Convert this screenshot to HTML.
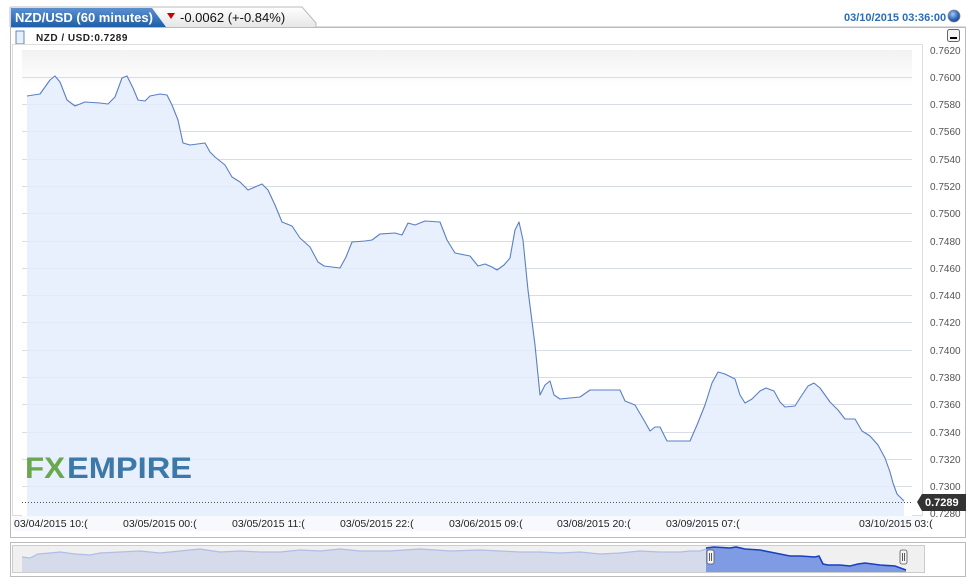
<!DOCTYPE html>
<html><head><meta charset="utf-8"><style>
html,body{margin:0;padding:0;background:#fff;width:976px;height:585px;overflow:hidden;font-family:"Liberation Sans",Verdana,sans-serif}
</style></head><body>
<svg width="976" height="585" viewBox="0 0 976 585" xmlns="http://www.w3.org/2000/svg" font-family="Liberation Sans, sans-serif">
<defs>
<linearGradient id="tab" x1="0" y1="0" x2="0" y2="1"><stop offset="0" stop-color="#5b8fd0"/><stop offset="1" stop-color="#1d5fa8"/></linearGradient>
<linearGradient id="tab2" x1="0" y1="0" x2="0" y2="1"><stop offset="0" stop-color="#ffffff"/><stop offset="1" stop-color="#e6e6e6"/></linearGradient>
<linearGradient id="bg" x1="0" y1="0" x2="0" y2="1"><stop offset="0" stop-color="#f2f2f2"/><stop offset="0.08" stop-color="#ffffff"/><stop offset="1" stop-color="#ffffff"/></linearGradient>
<radialGradient id="ball" cx="0.4" cy="0.35" r="0.7"><stop offset="0" stop-color="#a8c8f0"/><stop offset="0.6" stop-color="#2f6cc0"/><stop offset="1" stop-color="#1a3f80"/></radialGradient>
</defs>
<path d="M10 27 L10 8 Q10 7 12 7 L302 7 L316 23 L316 27" fill="url(#tab2)" stroke="#bbb"/>
<line x1="316" y1="27" x2="966" y2="27" stroke="#bbb"/>
<path d="M11 27 L11 8 L152 8 L166 27 Z" fill="url(#tab)"/>
<text x="15" y="22" font-size="13" font-weight="bold" fill="#fff">NZD/USD (60 minutes)</text>
<path d="M167 13 L175 13 L171 19 Z" fill="#c00"/>
<text x="180" y="22" font-size="13" fill="#111">-0.0062 (+-0.84%)</text>
<text x="844" y="21" font-size="11" font-weight="bold" fill="#2a6db8">03/10/2015 03:36:00</text>
<circle cx="954" cy="16" r="6" fill="url(#ball)" stroke="#888" stroke-width="0.8"/>
<rect x="10.5" y="27.5" width="955" height="510" fill="#fff" stroke="#bbb"/>
<rect x="16" y="31" width="8" height="13" fill="#e8f0fb" stroke="#3a6fb5" stroke-width="0.8"/>
<text x="36" y="41" font-size="10" font-weight="bold" fill="#222" letter-spacing="0.5">NZD / USD:0.7289</text>
<rect x="947.5" y="29.5" width="12" height="12" rx="2" fill="#f4f4f4" stroke="#666"/>
<rect x="950" y="37" width="7" height="2" fill="#000"/>
<rect x="12.5" y="44.5" width="910" height="471" fill="#fff" stroke="#ddd"/>
<rect x="22" y="50" width="890" height="466" fill="url(#bg)"/>
<g stroke="#d8dce4" stroke-width="1">
<line x1="22" y1="77.5" x2="912" y2="77.5"/><line x1="22" y1="104.5" x2="912" y2="104.5"/><line x1="22" y1="131.5" x2="912" y2="131.5"/><line x1="22" y1="159.5" x2="912" y2="159.5"/><line x1="22" y1="186.5" x2="912" y2="186.5"/><line x1="22" y1="213.5" x2="912" y2="213.5"/><line x1="22" y1="241.5" x2="912" y2="241.5"/><line x1="22" y1="268.5" x2="912" y2="268.5"/><line x1="22" y1="295.5" x2="912" y2="295.5"/><line x1="22" y1="322.5" x2="912" y2="322.5"/><line x1="22" y1="350.5" x2="912" y2="350.5"/><line x1="22" y1="377.5" x2="912" y2="377.5"/><line x1="22" y1="404.5" x2="912" y2="404.5"/><line x1="22" y1="432.5" x2="912" y2="432.5"/><line x1="22" y1="459.5" x2="912" y2="459.5"/><line x1="22" y1="486.5" x2="912" y2="486.5"/>
</g>
<polygon fill="#e3edfb" fill-opacity="0.85" points="27,516 27,96 40,94 50,80 55,76 60,82 67,100 75,106 85,102 100,103 108,104 115,97 122,78 127,76 133,88 138,100 145,101 150,96 160,94 167,95 172,105 178,120 183,143 190,145 205,143 210,152 215,157 225,165 232,177 240,182 248,190 255,187 262,184 268,190 275,205 282,222 292,226 300,238 310,247 318,262 324,266 340,268 346,257 352,242 365,241 372,240 380,234 395,233 402,235 408,223 415,225 425,221 440,222 447,240 455,253 470,256 478,266 485,264 492,267 497,270 504,265 510,258 515,230 519,222 523,240 528,290 535,345 540,395 545,385 550,381 554,395 560,399 570,398 580,397 590,390 600,390 620,390 625,401 635,405 645,422 650,431 655,427 660,427 667,441 680,441 690,441 697,425 705,405 712,383 718,372 725,374 735,379 740,395 745,403 752,399 760,391 766,388 774,391 780,402 785,407 795,406 800,398 808,386 814,383 820,388 830,402 838,410 845,419 855,419 862,431 870,436 878,445 885,458 890,472 893,483 897,494 904,501 904,516"/>
<polyline fill="none" stroke="#5b7fc4" stroke-width="1.1" stroke-linejoin="round" points="27,96 40,94 50,80 55,76 60,82 67,100 75,106 85,102 100,103 108,104 115,97 122,78 127,76 133,88 138,100 145,101 150,96 160,94 167,95 172,105 178,120 183,143 190,145 205,143 210,152 215,157 225,165 232,177 240,182 248,190 255,187 262,184 268,190 275,205 282,222 292,226 300,238 310,247 318,262 324,266 340,268 346,257 352,242 365,241 372,240 380,234 395,233 402,235 408,223 415,225 425,221 440,222 447,240 455,253 470,256 478,266 485,264 492,267 497,270 504,265 510,258 515,230 519,222 523,240 528,290 535,345 540,395 545,385 550,381 554,395 560,399 570,398 580,397 590,390 600,390 620,390 625,401 635,405 645,422 650,431 655,427 660,427 667,441 680,441 690,441 697,425 705,405 712,383 718,372 725,374 735,379 740,395 745,403 752,399 760,391 766,388 774,391 780,402 785,407 795,406 800,398 808,386 814,383 820,388 830,402 838,410 845,419 855,419 862,431 870,436 878,445 885,458 890,472 893,483 897,494 904,501"/>
<line x1="22" y1="502.5" x2="912" y2="502.5" stroke="#555" stroke-dasharray="1,2"/>
<text x="25" y="478" font-size="30" font-weight="bold" fill="#6aa84f" textLength="40" lengthAdjust="spacingAndGlyphs">FX</text>
<text x="67" y="478" font-size="30" fill="#3c78a8" font-weight="bold" textLength="125" lengthAdjust="spacingAndGlyphs">EMPIRE</text>
<g font-size="10" fill="#555">
<text x="930" y="54">0.7620</text><text x="930" y="81">0.7600</text><text x="930" y="108">0.7580</text><text x="930" y="135">0.7560</text><text x="930" y="163">0.7540</text><text x="930" y="190">0.7520</text><text x="930" y="217">0.7500</text><text x="930" y="245">0.7480</text><text x="930" y="272">0.7460</text><text x="930" y="299">0.7440</text><text x="930" y="326">0.7420</text><text x="930" y="354">0.7400</text><text x="930" y="381">0.7380</text><text x="930" y="408">0.7360</text><text x="930" y="436">0.7340</text><text x="930" y="463">0.7320</text><text x="930" y="490">0.7300</text><text x="930" y="517">0.7280</text>
</g>
<path d="M917 502 L922 494 L966 494 L966 511 L922 511 Z" fill="#333"/>
<text x="925" y="506" font-size="11" font-weight="bold" fill="#fff">0.7289</text>
<rect x="13" y="516" width="909" height="15" fill="#f7f9fd"/>
<g font-size="10.5" fill="#222">
<text x="14" y="527">03/04/2015 10:(</text><text x="123" y="527">03/05/2015 00:(</text><text x="232" y="527">03/05/2015 11:(</text><text x="340" y="527">03/05/2015 22:(</text><text x="449" y="527">03/06/2015 09:(</text><text x="557" y="527">03/08/2015 20:(</text><text x="666" y="527">03/09/2015 07:(</text><text x="859" y="527">03/10/2015 03:(</text>
</g>
<rect x="10.5" y="542.5" width="955" height="34" fill="#fff" stroke="#bbb"/>
<rect x="12.5" y="545.5" width="912" height="27" fill="#f0f0f0" stroke="#ccc"/>
<polygon fill="#d5dbea" points="22,572 22,557 30,558 38,554 50,553 60,552 75,554 90,555 100,553 120,552 140,551 160,553 180,551 200,549 220,552 240,551 260,552 280,552 300,550 320,551 340,549 360,551 390,551 420,549 450,551 480,550 500,551 520,552 540,552 560,553 580,552 600,554 620,553 640,551 660,552 680,552 690,551 700,551 706,549 706,572"/>
<polyline fill="none" stroke="#b0bde6" stroke-width="1.2" points="22,557 30,558 38,554 50,553 60,552 75,554 90,555 100,553 120,552 140,551 160,553 180,551 200,549 220,552 240,551 260,552 280,552 300,550 320,551 340,549 360,551 390,551 420,549 450,551 480,550 500,551 520,552 540,552 560,553 580,552 600,554 620,553 640,551 660,552 680,552 690,551 700,551 706,549"/>
<polygon fill="#7f9be3" points="706,572 706,548 714,547 730,548 736,547 745,549 760,550 775,553 790,556 800,556 815,557 819,556 823,564 828,565 840,565 850,566 858,564 865,563 880,565 895,566 906,570 906,572"/>
<polyline fill="none" stroke="#1a3fc0" stroke-width="1.6" points="706,548 714,547 730,548 736,547 745,549 760,550 775,553 790,556 800,556 815,557 819,556 823,564 828,565 840,565 850,566 858,564 865,563 880,565 895,566 906,570"/>
<g fill="#f4f4f4" stroke="#555" stroke-width="0.8">
<rect x="707" y="550" width="7" height="14" rx="2"/><rect x="900" y="550" width="7" height="14" rx="2"/>
</g>
<g stroke="#333" stroke-width="0.8"><line x1="709.5" y1="553" x2="709.5" y2="561"/><line x1="711.5" y1="553" x2="711.5" y2="561"/><line x1="902.5" y1="553" x2="902.5" y2="561"/><line x1="904.5" y1="553" x2="904.5" y2="561"/></g>
</svg>
</body></html>
